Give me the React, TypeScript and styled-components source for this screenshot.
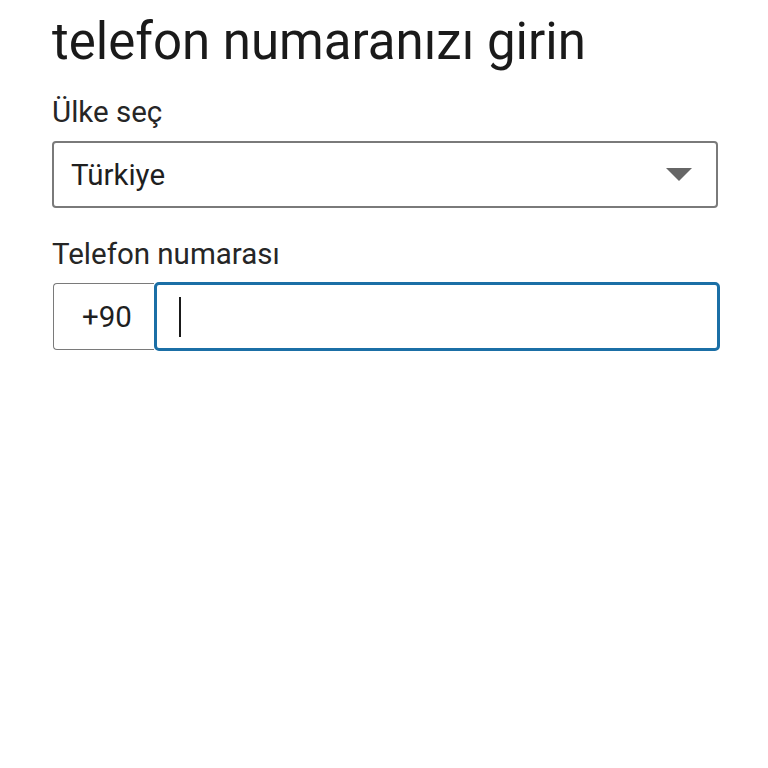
import styled, { createGlobalStyle } from 'styled-components'

const GlobalStyle = createGlobalStyle`
  body {
    margin: 0;
    background: #ffffff;
    font-family: Roboto, "Noto Sans", sans-serif;
    color: #1f1f1f;
  }
`

const Page = styled.main`
  padding: 0 50px 0 52px;
  display: flex;
  flex-direction: column;
`

const Title = styled.h1`
  margin: 11px 0 0;
  font-size: 51px;
  font-weight: 400;
  line-height: 1.2;
  color: #1a1a1a;
`

const Label = styled.label`
  display: block;
  margin-top: ${(p: { $top: number }) => p.$top}px;
  font-size: 29.5px;
  line-height: 34px;
  color: #262626;
`

const SelectBox = styled.div`
  margin-top: 12px;
  height: 67px;
  box-sizing: border-box;
  border: 2px solid #7a7a7a;
  border-radius: 4px;
  display: flex;
  align-items: center;
  justify-content: space-between;
  padding: 0 24px 0 17px;
  font-size: 29.5px;
  color: #1f1f1f;
`

const Caret = styled.span`
  width: 0;
  height: 0;
  border-left: 13px solid transparent;
  border-right: 13px solid transparent;
  border-top: 13px solid #666666;
`

const PhoneRow = styled.div`
  margin-top: 11px;
  display: flex;
  height: 69px;
`

const Prefix = styled.div`
  width: 101px;
  margin-left: 1px;
  box-sizing: border-box;
  border: 1.5px solid #7a7a7a;
  border-right: none;
  border-radius: 4px 0 0 4px;
  margin-top: 1px;
  height: 67px;
  display: flex;
  align-items: center;
  justify-content: center;
  padding-left: 6px;
  font-size: 29.5px;
  color: #1f1f1f;
`

const PhoneInput = styled.div`
  flex: 1;
  margin-right: -2px;
  box-sizing: border-box;
  border: 3px solid #1b6fa6;
  border-radius: 5px;
  display: flex;
  align-items: center;
  padding-left: 22px;
`

const Cursor = styled.span`
  width: 2px;
  height: 40px;
  background: #1a1a1a;
`

export default function App() {
  return (
    <>
      <GlobalStyle />
      <Page>
        <Title>telefon numaranızı girin</Title>
        <Label $top={23}>Ülke seç</Label>
        <SelectBox>
          <span>Türkiye</span>
          <Caret />
        </SelectBox>
        <Label $top={29}>Telefon numarası</Label>
        <PhoneRow>
          <Prefix>+90</Prefix>
          <PhoneInput>
            <Cursor />
          </PhoneInput>
        </PhoneRow>
      </Page>
    </>
  )
}
